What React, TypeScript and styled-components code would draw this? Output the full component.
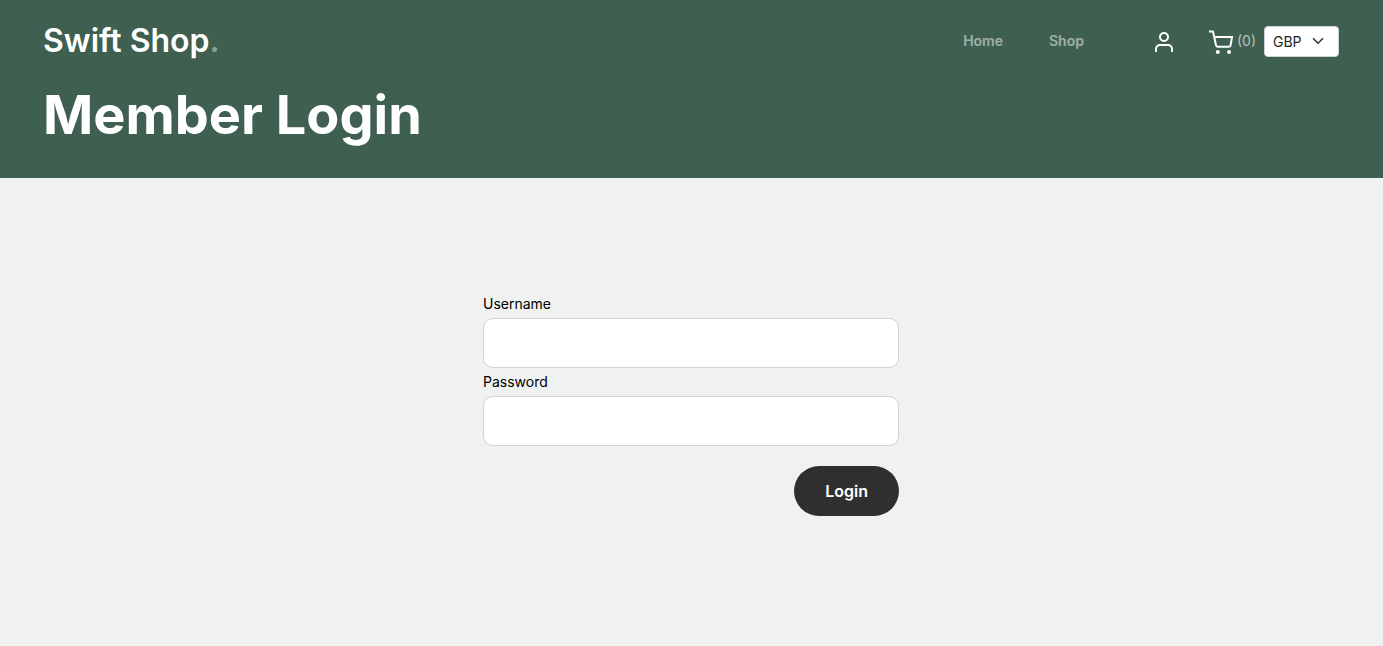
import React from 'react';
import styled, { createGlobalStyle } from 'styled-components';

const GlobalStyle = createGlobalStyle`
  *, *::before, *::after { box-sizing: border-box; }
  body {
    margin: 0;
    background: #eff2f1;
    color: #000;
    font-family: Inter, "Liberation Sans", sans-serif;
    font-size: 14px;
    line-height: 28px;
  }
`;

const Header = styled.header`
  background: #3f5f50;
  padding: 16px 0 30px;
`;

const Container = styled.div`
  width: 100%;
  max-width: 1321px;
  margin: 0 auto;
  padding: 0 13px 0 12px;
`;

const NavBar = styled(Container)`
  display: flex;
  align-items: center;
  justify-content: space-between;
  height: 50px;
`;

const Brand = styled.a`
  color: #fff;
  font-size: 32px;
  font-weight: 600;
  line-height: 48px;
  text-decoration: none;

  span { opacity: 0.4; }
`;

const Nav = styled.nav`
  display: flex;
  align-items: center;
`;

const NavLinks = styled.div`
  display: flex;
  gap: 46px;
  margin-right: 68px;
`;

const NavLink = styled.a`
  color: #fff;
  font-weight: 600;
  opacity: 0.5;
  text-decoration: none;
`;

const Tools = styled.div`
  display: flex;
  align-items: center;
`;

const IconLink = styled.a`
  display: flex;
  align-items: center;
  gap: 3px;
  color: #fff;
  text-decoration: none;

  svg {
    display: block;
    margin-top: 2px;
  }
`;

const UserLink = styled(IconLink)`
  margin-right: 32px;
`;

const CartLink = styled(IconLink)`
  margin-right: 8px;
`;

const Count = styled.span`
  opacity: 0.6;
`;

const SelectBox = styled.div`
  position: relative;
  display: flex;

  svg {
    position: absolute;
    right: 15px;
    top: 9px;
    pointer-events: none;
  }
`;

const Select = styled.select`
  appearance: none;
  width: 75px;
  height: 31px;
  padding: 4px 32px 4px 8px;
  border: 1px solid #ced4da;
  border-radius: 4px;
  background: #fff;
  color: #212529;
  font: inherit;
  line-height: 21px;
`;

const Title = styled.h1`
  margin: 16px 0 0;
  color: #fff;
  font-size: 54px;
  font-weight: 700;
  line-height: 66px;
`;

const Main = styled.main`
  display: flex;
  justify-content: center;
  padding: 112px 13px 112px 12px;
`;

const Form = styled.form`
  display: flex;
  flex-direction: column;
  width: 100%;
  max-width: 416px;
`;

const Label = styled.label`
  line-height: 28px;
`;

const Input = styled.input`
  width: 100%;
  height: 50px;
  padding: 6px 12px;
  border: 1px solid #ced4da;
  border-radius: 10px;
  background: #fff;
  font: inherit;
`;

const Submit = styled.button`
  align-self: flex-end;
  height: 50px;
  margin-top: 20px;
  padding: 0 31px;
  border: 0;
  border-radius: 30px;
  background: #2f2f2f;
  color: #fff;
  font-family: inherit;
  font-size: 16px;
  font-weight: 600;
  line-height: 24px;
`;

function UserIcon() {
  return (
    <svg width="24" height="24" viewBox="0 0 24 24" fill="none" stroke="currentColor" strokeWidth="2" aria-hidden="true">
      <path d="M20 22v-3a4 4 0 0 0-4-4H8a4 4 0 0 0-4 4v3" />
      <circle cx="12" cy="7" r="4" />
    </svg>
  );
}

function CartIcon() {
  return (
    <svg width="26" height="26" viewBox="0 0 26 26" fill="none" stroke="currentColor" strokeWidth="2" aria-hidden="true">
      <path d="M1 2.6h4l3 13.6a2 2 0 0 0 2 1.6h10.6a2 2 0 0 0 2-1.6L24 8H6.2" />
      <circle cx="9.8" cy="22.9" r="2" fill="currentColor" stroke="none" />
      <circle cx="21" cy="22.9" r="2" fill="currentColor" stroke="none" />
    </svg>
  );
}

function Chevron() {
  return (
    <svg width="12" height="12" viewBox="0 0 16 16" fill="none" stroke="#343a40" strokeWidth="2.2" strokeLinecap="round" strokeLinejoin="round" aria-hidden="true">
      <path d="m2 5 6 6 6-6" />
    </svg>
  );
}

export default function App() {
  return (
    <>
      <GlobalStyle />
      <Header>
        <NavBar>
          <Brand href="#">Swift Shop<span>.</span></Brand>
          <Nav aria-label="Main">
            <NavLinks>
              <NavLink href="#">Home</NavLink>
              <NavLink href="#">Shop</NavLink>
            </NavLinks>
            <Tools>
              <UserLink href="#" aria-label="Account"><UserIcon /></UserLink>
              <CartLink href="#" aria-label="Cart"><CartIcon /><Count>(0)</Count></CartLink>
              <SelectBox>
                <Select aria-label="Currency" defaultValue="GBP">
                  <option>GBP</option>
                  <option>USD</option>
                  <option>EUR</option>
                </Select>
                <Chevron />
              </SelectBox>
            </Tools>
          </Nav>
        </NavBar>
        <Container>
          <Title>Member Login</Title>
        </Container>
      </Header>
      <Main>
        <Form>
          <Label htmlFor="username">Username</Label>
          <Input id="username" type="text" />
          <Label htmlFor="password">Password</Label>
          <Input id="password" type="password" />
          <Submit type="button">Login</Submit>
        </Form>
      </Main>
    </>
  );
}
